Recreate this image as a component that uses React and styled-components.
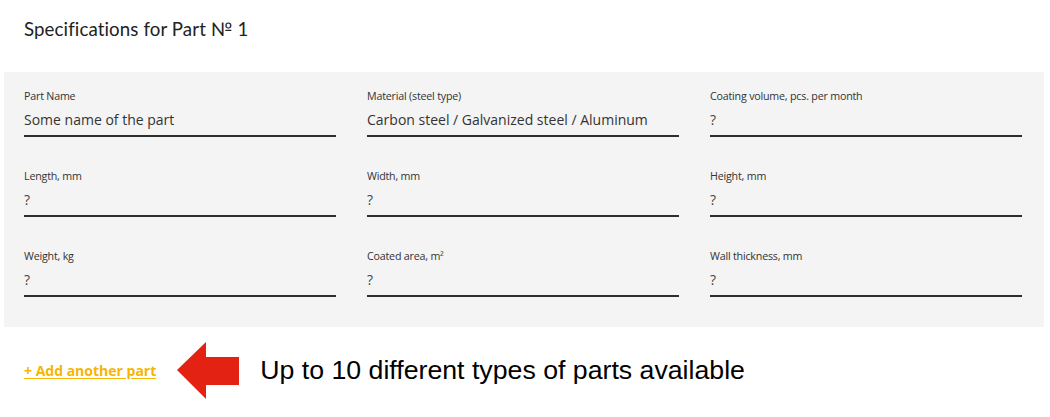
import React from "react";
import styled, { createGlobalStyle } from "styled-components";

const Global = createGlobalStyle`
  html, body { margin: 0; padding: 0; background: #fff; }
  body { font-family: "Open Sans", "Liberation Sans", sans-serif; color: #333; }
  * { box-sizing: border-box; }
`;

const Page = styled.div`
  width: 1050px;
  height: 417px;
  overflow: hidden;
  padding: 0 6px 0 4px;
`;

const Title = styled.h2`
  margin: 0;
  height: 72px;
  padding: 16px 0 0 20px;
  font-family: "Lato", "Open Sans", sans-serif;
  font-weight: 400;
  font-size: 18.7px;
  line-height: 26px;
  color: #222;
  letter-spacing: 0.1px;
`;

const Panel = styled.div`
  background: #f4f4f4;
  padding: 17px 22px 30px 20px;
  display: grid;
  grid-template-columns: repeat(3, 312px);
  column-gap: 31px;
  row-gap: 32px;
`;

const Field = styled.label`
  display: flex;
  flex-direction: column;
  border-bottom: 2px solid #2e2e2e;
  padding-bottom: 5px;
`;

const Label = styled.span`
  font-size: 10.7px;
  line-height: 14px;
  color: #333;
  margin-bottom: 7px;
  letter-spacing: -0.2px;
`;

const Value = styled.span`
  font-size: 14px;
  line-height: 20px;
  color: ${(p) => (p.$placeholder ? "#444" : "#333")};
`;

const Footer = styled.div`
  display: flex;
  align-items: center;
  height: 86px;
  padding-left: 20px;
`;

const AddLink = styled.a`
  font-family: "Open Sans", sans-serif;
  font-weight: 700;
  font-size: 14px;
  color: #f7b500;
  text-decoration: underline;
  text-underline-offset: 2px;
  cursor: pointer;
  margin-right: 21px;
`;

const Arrow = styled.svg`
  flex: none;
  display: block;
  margin-right: 21px;
`;

const Note = styled.span`
  font-family: "Liberation Sans", Arial, sans-serif;
  font-size: 26.7px;
  color: #000;
`;

const fields = [
  ["Part Name", "Some name of the part"],
  ["Material (steel type)", "Carbon steel / Galvanized steel / Aluminum"],
  ["Coating volume, pcs. per month", "?"],
  ["Length, mm", "?"],
  ["Width, mm", "?"],
  ["Height, mm", "?"],
  ["Weight, kg", "?"],
  ["Coated area, m²", "?"],
  ["Wall thickness, mm", "?"],
];

export default function App() {
  return (
    <Page>
      <Global />
      <Title>Specifications for Part № 1</Title>
      <Panel>
        {fields.map(([l, v]) => (
          <Field key={l}>
            <Label>{l}</Label>
            <Value $placeholder={v === "?"}>{v}</Value>
          </Field>
        ))}
      </Panel>
      <Footer>
        <AddLink>+ Add another part</AddLink>
        <Arrow width="62" height="57" viewBox="0 0 62 57">
          <polygon
            points="0,28 29,0 29,15 62,15 62,43 29,43 29,57"
            fill="#e32213"
          />
        </Arrow>
        <Note>Up to 10 different types of parts available</Note>
      </Footer>
    </Page>
  );
}
